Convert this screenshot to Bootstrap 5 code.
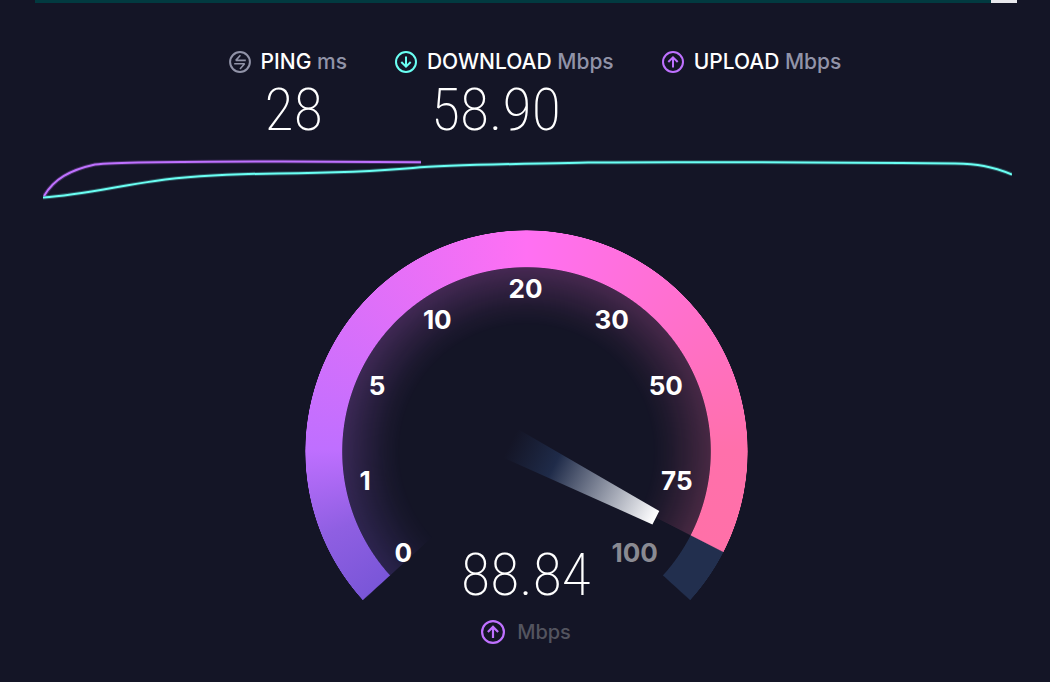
<!DOCTYPE html>
<html lang="en">
<head>
<meta charset="utf-8">
<meta name="viewport" content="width=device-width, initial-scale=1">
<title>Speed test</title>
<link href="https://cdn.jsdelivr.net/npm/bootstrap@5.3.0/dist/css/bootstrap.min.css" rel="stylesheet">
<style>
  body { background: #141526; color: #fff; font-family: Inter, "Liberation Sans", sans-serif; }
  .page-wrap { padding: 0 33px 0 35px; }
  .test-progress { height: 3px; background: #023a40; border-radius: 0; }
  .test-progress .rest { width: 26px; background: #e8e8ec; }
  .results { padding: 44px 0 0 18px; column-gap: 48px; }
  .result-label { font-size: 21px; font-weight: 500; line-height: 30px; gap: 10px; }
  .unit { color: #9193a8; }
  .ico { width: 22px; height: 22px; fill: none; stroke: currentColor; stroke-width: 2; flex: none; }
  .ping { color: #9193a8; }
  .down { color: #6afff3; }
  .up { color: #bf71ff; }
  .big-value { font-family: "Roboto Condensed", Roboto, sans-serif; font-weight: 200; font-size: 60px; line-height: 72px; }
  .result-value { padding-left: 36px; margin-top: -3px; }
  .chart { height: 50px; margin: 10px 5px 0 8px; }
  .chart svg { overflow: hidden; }
  .chart path { fill: none; vector-effect: non-scaling-stroke; }
  .gauge { width: 443px; max-width: 100%; margin-top: 24px; }
  .sweep { position: absolute; inset: 0; border-radius: 50%; }
  .ring {
    background: conic-gradient(from 227.6deg, transparent, #7a56d8 .3deg, #8f5fe2 20deg, #bf6fff 43deg, #ff70f3 132.3deg, #ff70ab 222deg, #ff70a8 249.3deg, #222f4e 249.6deg 264.5deg, transparent 264.8deg);
    -webkit-mask: radial-gradient(closest-side, transparent 83%, #000 83.4%, #000 99.7%, transparent);
    mask: radial-gradient(closest-side, transparent 83%, #000 83.4%, #000 99.7%, transparent);
  }
  .glow {
    background: conic-gradient(from 227.6deg, transparent, #7a56d8 .3deg, #8f5fe2 20deg, #bf6fff 43deg, #ff70f3 132.3deg, #ff70ab 222deg, #ff70a8 249.3deg, transparent 249.6deg);
    -webkit-mask: radial-gradient(closest-side, transparent 57%, rgba(0,0,0,.04) 64%, rgba(0,0,0,.13) 74%, rgba(0,0,0,.22) 83.1%, transparent 83.4%);
    mask: radial-gradient(closest-side, transparent 57%, rgba(0,0,0,.04) 64%, rgba(0,0,0,.13) 74%, rgba(0,0,0,.22) 83.1%, transparent 83.4%);
  }
  .dial { position: relative; display: block; }
  .dial text { fill: #fff; font-weight: 700; font-size: 26px; text-anchor: middle; }
  .dial .ahead { fill: #8a8a92; }
  .reading { position: absolute; left: 0; right: 0; bottom: 26px; }
  .reading-unit { font-size: 20px; font-weight: 500; line-height: 30px; color: #53545f; gap: 12px; margin-top: 6px; }
  .reading-unit .ico { width: 24px; height: 24px; }
</style>
</head>
<body>
<main class="page-wrap">
  <div class="test-progress progress justify-content-end"><div class="rest"></div></div>

  <section class="results d-flex flex-wrap justify-content-center">
    <div>
      <div class="result-label d-flex align-items-center">
        <svg class="ico ping" viewBox="0 0 22 22" aria-hidden="true"><circle cx="11" cy="11" r="9.9"/><path stroke-width="1.6" stroke-linejoin="bevel" d="M11.4 4.3 6.8 9.4H16.8M5.2 12.8H15.6L11 18"/></svg>
        <span>PING <span class="unit">ms</span></span>
      </div>
      <div class="big-value result-value">28</div>
    </div>
    <div>
      <div class="result-label d-flex align-items-center">
        <svg class="ico down" viewBox="0 0 22 22" aria-hidden="true"><circle cx="11" cy="11" r="10"/><path d="M11 5.6V15.6M6.3 11 11 15.7 15.7 11"/></svg>
        <span>DOWNLOAD <span class="unit">Mbps</span></span>
      </div>
      <div class="big-value result-value">58.90</div>
    </div>
    <div>
      <div class="result-label d-flex align-items-center">
        <svg class="ico up" viewBox="0 0 22 22" aria-hidden="true"><circle cx="11" cy="11" r="10"/><path d="M11 16.4V6.4M6.3 11 11 6.3 15.7 11"/></svg>
        <span>UPLOAD <span class="unit">Mbps</span></span>
      </div>
    </div>
  </section>

  <div class="chart">
    <svg class="d-block w-100 h-100" viewBox="0 0 969 50" preserveAspectRatio="none" role="img" aria-label="Download and upload speed over time">
      <g stroke="#6afff3"><path stroke-opacity=".25" stroke-width="4" d="M0 41.500C38 39 75 30 112 25C150 19.500 185 18 235 17.500C285 17 325 16 370 12C410 8.500 480 8 545 6.500C640 5.500 780 6.500 912 7.500C934 8 948 10 969 18.500"/>
      <path stroke-width="2" d="M0 41.500C38 39 75 30 112 25C150 19.500 185 18 235 17.500C285 17 325 16 370 12C410 8.500 480 8 545 6.500C640 5.500 780 6.500 912 7.500C934 8 948 10 969 18.500"/></g>
      <g stroke="#bf71ff"><path stroke-opacity=".25" stroke-width="4" d="M1 40C11 23 27 14 52 8.500C80 5.500 180 5.500 240 5.500L378 6.300"/>
      <path stroke-width="2" d="M1 40C11 23 27 14 52 8.500C80 5.500 180 5.500 240 5.500L378 6.300"/></g>
    </svg>
  </div>

  <section class="gauge position-relative mx-auto">
    <div class="sweep glow"></div>
    <div class="sweep ring"></div>
    <svg class="dial w-100" viewBox="0 0 442 442">
      <defs>
        <linearGradient id="needle" gradientUnits="userSpaceOnUse" x1="-18" y1="0" x2="145" y2="0">
          <stop offset="0" stop-color="#1e2a47" stop-opacity="0"/>
          <stop offset=".3" stop-color="#1f2b49"/>
          <stop offset=".97" stop-color="#f7f7f9"/>
          <stop offset="1" stop-color="#fff"/>
        </linearGradient>
      </defs>
      <path fill="url(#needle)" transform="translate(221 221) rotate(27.100)" d="M-18-16 145-7.500V7.500L-18 16Z"/>
      <text x="98" y="331">0</text>
      <text x="60" y="259">1</text>
      <text x="72" y="165">5</text>
      <text x="132" y="99">10</text>
      <text x="220" y="68">20</text>
      <text x="306" y="99">30</text>
      <text x="360" y="165">50</text>
      <text x="371" y="259">75</text>
      <text x="329" y="331" class="ahead">100</text>
    </svg>
    <div class="reading text-center">
      <div class="big-value">88.84</div>
      <div class="reading-unit d-flex justify-content-center align-items-center">
        <svg class="ico up" viewBox="0 0 22 22" aria-hidden="true"><circle cx="11" cy="11" r="10"/><path d="M11 16.400V6.400M6.300 11 11 6.300 15.700 11"/></svg>
        <span>Mbps</span>
      </div>
    </div>
  </section>
</main>
<script src="https://cdn.jsdelivr.net/npm/bootstrap@5.3.0/dist/js/bootstrap.bundle.min.js"></script>
</body>
</html>
